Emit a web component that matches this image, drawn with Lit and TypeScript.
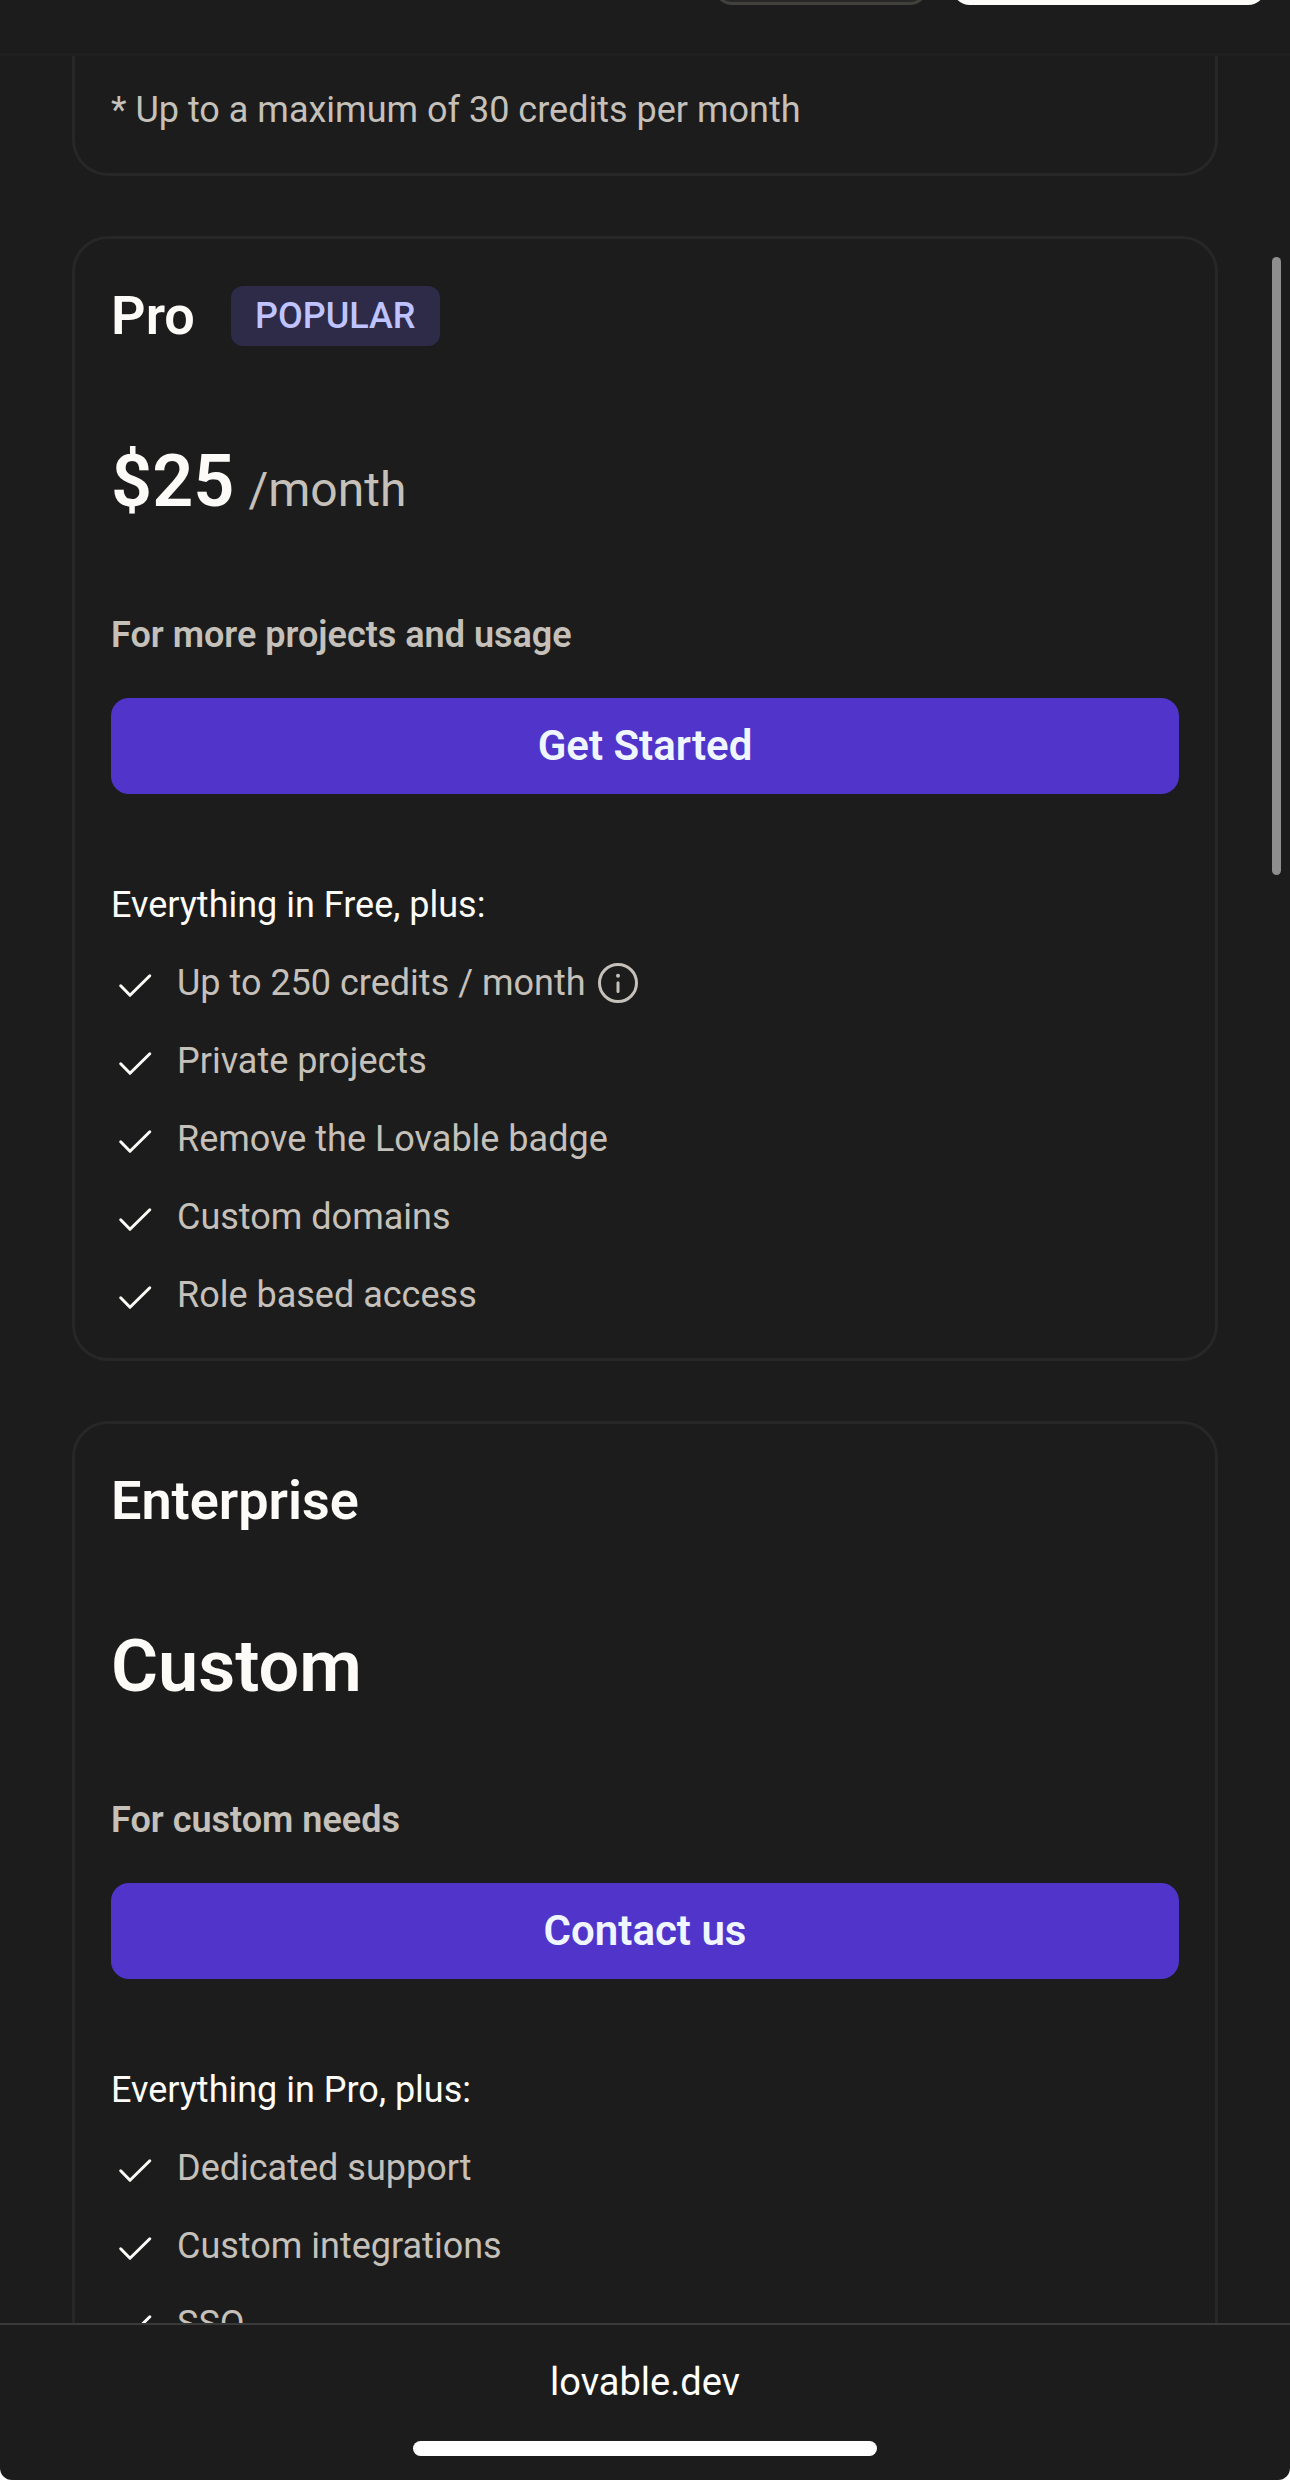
import { LitElement, html, css, nothing } from "lit";
import { customElement, property } from "lit/decorators.js";

interface Feature {
  label: string;
  info?: boolean;
}

interface Plan {
  name: string;
  badge?: string;
  price: string;
  period?: string;
  tagline: string;
  action: string;
  intro: string;
  features: Feature[];
}

const PLANS: Plan[] = [
  {
    name: "Pro",
    badge: "POPULAR",
    price: "$25",
    period: "/month",
    tagline: "For more projects and usage",
    action: "Get Started",
    intro: "Everything in Free, plus:",
    features: [
      { label: "Up to 250 credits / month", info: true },
      { label: "Private projects" },
      { label: "Remove the Lovable badge" },
      { label: "Custom domains" },
      { label: "Role based access" },
    ],
  },
  {
    name: "Enterprise",
    price: "Custom",
    tagline: "For custom needs",
    action: "Contact us",
    intro: "Everything in Pro, plus:",
    features: [
      { label: "Dedicated support" },
      { label: "Custom integrations" },
      { label: "SSO" },
    ],
  },
];

@customElement("plan-card")
export class PlanCard extends LitElement {
  @property({ attribute: false }) plan!: Plan;

  static styles = css`
    :host {
      display: block;
      box-sizing: border-box;
      padding: 36px;
      border: 3px solid #272727;
      border-radius: 36px;
    }
    .head {
      display: flex;
      align-items: center;
      gap: 36px;
      height: 81px;
      margin-bottom: 84px;
    }
    .name {
      margin: 0;
      font-size: 54px;
      line-height: 72px;
      font-weight: 600;
      color: #fcfbf8;
    }
    .badge {
      padding: 0 24px;
      border-radius: 12px;
      background: #2d2b47;
      color: #bfc3ff;
      font-size: 36px;
      line-height: 60px;
      font-weight: 500;
    }
    .price {
      display: flex;
      align-items: baseline;
      gap: 14px;
      margin: 0 0 84px;
    }
    .amount {
      font-size: 72px;
      line-height: 84px;
      font-weight: 600;
      color: #fcfbf8;
    }
    .period {
      font-size: 48px;
      line-height: 54px;
      color: #c5c1ba;
    }
    .tagline {
      margin: 0 0 36px;
      font-size: 36px;
      line-height: 54px;
      font-weight: 600;
      color: #c5c1ba;
    }
    .action {
      display: block;
      width: 100%;
      height: 96px;
      margin: 0 0 84px;
      padding: 0;
      border: 0;
      border-radius: 18px;
      background: #5135cb;
      color: #f0f6ff;
      font: 600 42px / 96px Roboto, "Liberation Sans", sans-serif;
      cursor: pointer;
    }
    .intro {
      margin: 0 0 24px;
      font-size: 36px;
      line-height: 54px;
      color: #fcfbf8;
    }
    .features {
      display: flex;
      flex-direction: column;
      gap: 24px;
      margin: 0;
      padding: 0;
      list-style: none;
    }
    .feature {
      display: flex;
      align-items: center;
      gap: 18px;
      font-size: 36px;
      line-height: 54px;
      color: #c5c1ba;
    }
    .check {
      flex: none;
      width: 48px;
      height: 48px;
      color: #fcfbf8;
    }
    .label {
      display: flex;
      align-items: center;
      gap: 12px;
    }
    .info {
      display: flex;
      padding: 0;
      border: 0;
      background: none;
      color: inherit;
      cursor: pointer;
    }
    .info-icon {
      width: 40px;
      height: 40px;
    }
  `;

  render() {
    const p = this.plan;
    return html`
      <div class="head">
        <h2 class="name">${p.name}</h2>
        ${p.badge ? html`<span class="badge">${p.badge}</span>` : nothing}
      </div>
      <p class="price">
        <span class="amount">${p.price}</span>
        ${p.period ? html`<span class="period">${p.period}</span>` : nothing}
      </p>
      <p class="tagline">${p.tagline}</p>
      <button class="action" type="button">${p.action}</button>
      <p class="intro">${p.intro}</p>
      <ul class="features">
        ${p.features.map(
          (f) => html`<li class="feature">
            <svg class="check" viewBox="0 0 48 48" fill="none" stroke="currentColor" stroke-width="3" stroke-linecap="round" stroke-linejoin="round" aria-hidden="true">
              <path d="M9.7 26.8 L19 36.3 L38.8 16.8" />
            </svg>
            <span class="label">
              ${f.label}
              ${f.info
                ? html`<button class="info" type="button" aria-label="Credit details">
                    <svg class="info-icon" viewBox="0 0 40 40" fill="none" stroke="currentColor" stroke-width="3" stroke-linecap="round" aria-hidden="true">
                      <circle cx="20" cy="20" r="18.5" />
                      <path d="M20 19.8 V28.5" />
                      <circle cx="20" cy="12.7" r="2" fill="currentColor" stroke="none" />
                    </svg>
                  </button>`
                : nothing}
            </span>
          </li>`
        )}
      </ul>
    `;
  }
}

@customElement("app-root")
export class AppRoot extends LitElement {
  static styles = css`
    :host {
      display: block;
      height: 100vh;
      background: #fff;
      font-family: Roboto, "Liberation Sans", sans-serif;
    }
    .screen {
      position: relative;
      display: flex;
      flex-direction: column;
      height: 100%;
      overflow: hidden;
      border-radius: 0 0 12px 12px;
      background: #1c1c1c;
    }
    .header {
      flex: none;
      display: flex;
      justify-content: flex-end;
      align-items: flex-end;
      gap: 24px;
      height: 56px;
      box-sizing: border-box;
      padding: 0 24px 48px;
      border-bottom: 3px solid #1f1f1f;
      overflow: hidden;
    }
    .nav-button {
      flex: none;
      width: 214px;
      height: 96px;
      padding: 0;
      border: 3px solid #41403d;
      border-radius: 18px;
      background: #272725;
    }
    .primary {
      width: 314px;
      border-color: #fcfbf8;
      background: #fcfbf8;
    }
    .plans {
      flex: 1;
      min-height: 0;
      display: flex;
      flex-direction: column;
      gap: 60px;
      padding: 0 72px;
      overflow: hidden;
    }
    .plans > * {
      flex: none;
    }
    .free {
      padding: 27px 36px 36px;
      border: 3px solid #272727;
      border-top: 0;
      border-radius: 0 0 36px 36px;
    }
    .note {
      margin: 0;
      font-size: 36px;
      line-height: 54px;
      color: #c5c1ba;
    }
    .scrollbar {
      position: absolute;
      top: 257px;
      right: 9px;
      width: 9px;
      height: 618px;
      border-radius: 5px;
      background: #8e8e8e;
    }
    .footer {
      flex: none;
      display: flex;
      flex-direction: column;
      align-items: center;
      justify-content: space-between;
      height: 157px;
      box-sizing: border-box;
      padding: 30px 0 24px;
      border-top: 2px solid #3a3a3a;
    }
    .address {
      color: #fff;
      font-size: 38px;
      line-height: 54px;
      text-decoration: none;
    }
    .indicator {
      width: 36%;
      height: 15px;
      border-radius: 8px;
      background: #fff;
    }
  `;

  render() {
    return html`
      <div class="screen">
        <header class="header">
          <button class="nav-button" type="button" aria-label="Log in"></button>
          <button class="nav-button primary" type="button" aria-label="Get started"></button>
        </header>
        <main class="plans">
          <section class="free">
            <p class="note">* Up to a maximum of 30 credits per month</p>
          </section>
          ${PLANS.map((p) => html`<plan-card .plan=${p}></plan-card>`)}
        </main>
        <footer class="footer">
          <a class="address" href="#">lovable.dev</a>
          <div class="indicator"></div>
        </footer>
        <div class="scrollbar"></div>
      </div>
    `;
  }
}
